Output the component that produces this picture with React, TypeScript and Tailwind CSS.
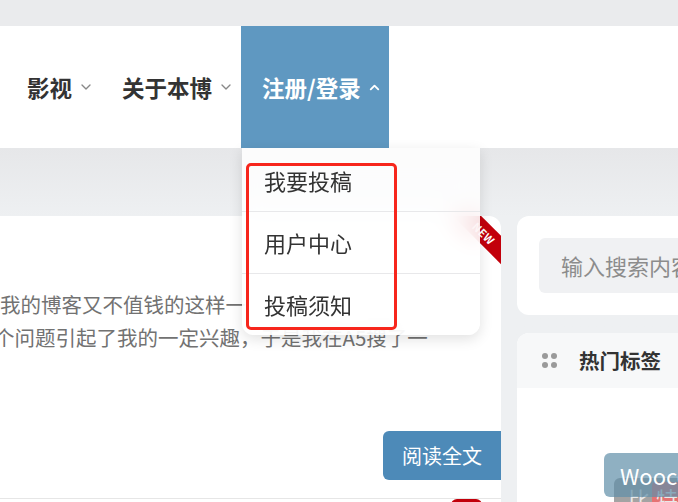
import { ChevronDown, ChevronUp } from 'lucide-react';

const font = { fontFamily: '"Noto Sans CJK SC", "Noto Sans", sans-serif' };

function NavItem({ label, active }: { label: string; active?: boolean }) {
  return (
    <div
      className={`flex h-full items-center gap-[6px] pl-[21px] pr-[7px] ${
        active ? 'bg-[#5f98c1] text-white' : 'text-[#333]'
      }`}
    >
      <span className="text-[22.5px] font-bold leading-none">{label}</span>
      {active ? (
        <ChevronUp size={15} strokeWidth={3} className="text-white" />
      ) : (
        <ChevronDown size={16} strokeWidth={2} className="text-[#888]" />
      )}
    </div>
  );
}

export default function App() {
  return (
    <div className="relative h-[502px] w-[678px] overflow-hidden bg-[#eef0f2]" style={font}>
      {/* top strip */}
      <div className="h-[26px] bg-[#eaebed]" />

      {/* header */}
      <header className="flex h-[122px] items-stretch bg-white pl-[6px]">
        <NavItem label="影视" />
        <NavItem label="关于本博" />
        <NavItem label="注册/登录" active />
      </header>

      {/* content */}
      <div className="bg-gradient-to-b from-[#e6e7e9] to-[#eef0f2] to-[68px] pt-[68px]">
        <div className="flex gap-[16px]">
          {/* main column */}
          <div className="flex w-[501px] shrink-0 flex-col">
            <article className="relative h-[283px] overflow-hidden rounded-tr-xl border-b border-[#e6e6e6] bg-white">
              <div className="absolute right-0 top-0 h-[64px] w-[64px] overflow-hidden">
                <div className="absolute left-[2px] top-[7px] flex h-[20px] w-[90px] rotate-45 items-center justify-center bg-[#c2000b] text-[11px] font-bold tracking-wide text-white">
                  NEW
                </div>
              </div>
              <div className="pt-[72px] text-[20.5px] leading-[33px] text-[#727272]">
                <p className="whitespace-nowrap">我的博客又不值钱的这样一</p>
                <p className="-ml-[6px] whitespace-nowrap">个问题引起了我的一定兴趣，于是我在A5搜了一</p>
              </div>
              <div className="mt-[77px] flex justify-end">
                <button className="h-[49px] w-[118px] rounded-l-md bg-[#4d8ab8] text-[20px] text-white">
                  阅读全文
                </button>
              </div>
            </article>
            <div className="relative h-[20px] bg-white">
              <div className="absolute left-[451px] top-0 h-[6px] w-[31px] rounded-t-md bg-[#c2000b]" />
            </div>
          </div>

          {/* sidebar */}
          <aside className="flex w-[200px] shrink-0 flex-col gap-[18px]">
            <div className="rounded-xl bg-white p-[22px]">
              <div className="flex h-[55px] items-center whitespace-nowrap rounded-md bg-[#f0f1f3] pl-[22px] text-[22px] text-[#8c8c8c]">
                输入搜索内容
              </div>
            </div>
            <div className="relative h-[200px] overflow-hidden rounded-t-xl bg-white">
              <div className="flex h-[55px] items-center gap-[22px] bg-[#f7f8f9] pl-[25px]">
                <div className="grid grid-cols-2 gap-[3px]">
                  <span className="h-[6px] w-[6px] rounded-full bg-[#9a9a9a]" />
                  <span className="h-[6px] w-[6px] rounded-full bg-[#9a9a9a]" />
                  <span className="h-[6px] w-[6px] rounded-full bg-[#9a9a9a]" />
                  <span className="h-[6px] w-[6px] rounded-full bg-[#9a9a9a]" />
                </div>
                <span className="text-[20.5px] font-bold text-[#333]">热门标签</span>
              </div>
              {/* tag cloud */}
              <div className="absolute left-[97px] top-[145px] flex h-[40px] items-center whitespace-nowrap rounded-md bg-[#a3a3a3] pl-[14px] text-[22px] text-[#e9e9e9]">
                比<span className="ml-[2px] rounded-sm bg-[#e57373] px-[4px]">特币</span>
              </div>
              <div className="absolute left-[87px] top-[120px] flex h-[44px] items-center whitespace-nowrap rounded-md bg-[#5f8fa8]/70 px-[16px] text-[22px] text-white">
                Woocommerce
              </div>
            </div>
          </aside>
        </div>
      </div>

      {/* dropdown menu */}
      <div className="absolute left-[242px] top-[148px] w-[238px] rounded-b-xl bg-white/85 shadow-[0_4px_14px_rgba(0,0,0,0.12)] backdrop-blur-md">
        {['我要投稿', '用户中心', '投稿须知'].map((t, i) => (
          <div
            key={t}
            className={`flex pl-[22px] text-[22px] text-[#333] ${
              i === 0 ? 'h-[63px] items-start pt-[16px]' : 'h-[62px] items-center border-t border-[#e8e8ea]'
            }`}
          >
            {t}
          </div>
        ))}
      </div>

      {/* highlight box */}
      <div className="pointer-events-none absolute left-[246px] top-[163px] h-[167px] w-[151px] rounded-[5px] border-[3px] border-[#f7261c]" />
    </div>
  );
}
